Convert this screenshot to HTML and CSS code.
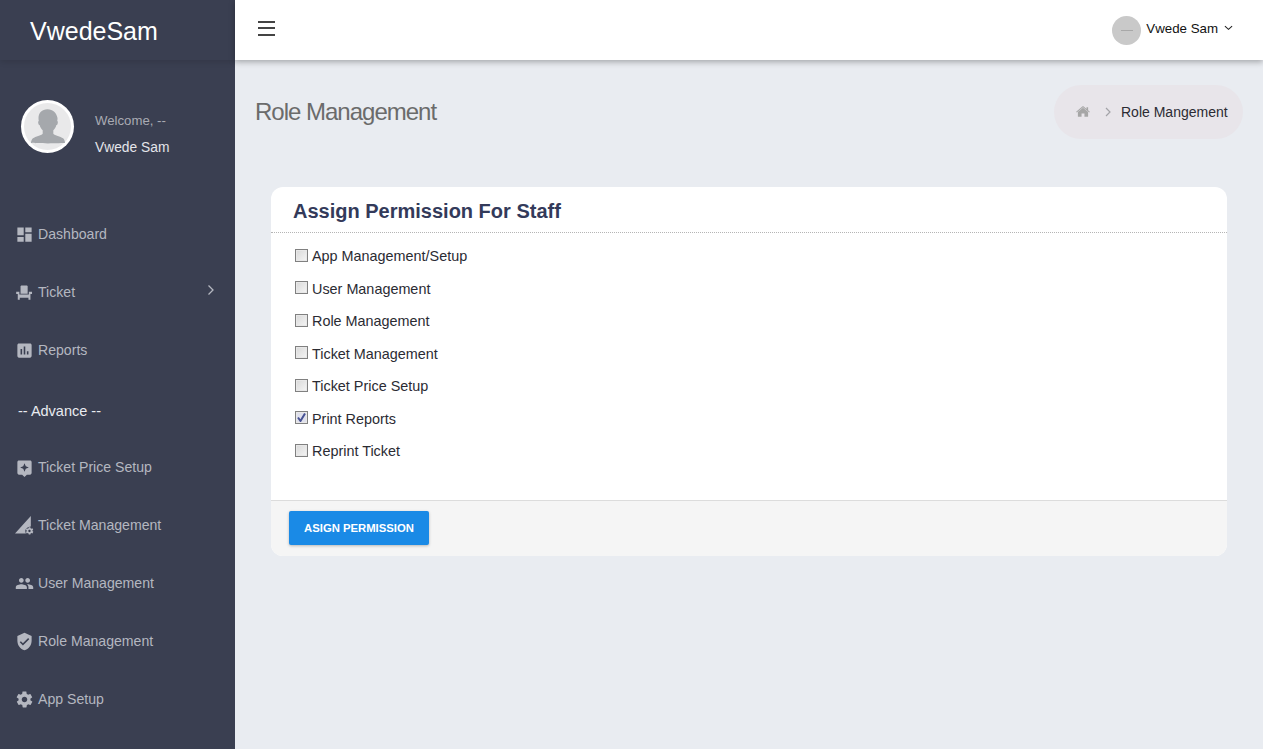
FILE: index.html
```html
<!DOCTYPE html>
<html lang="en">
<head>
  <meta charset="UTF-8">
  <meta name="viewport" content="width=device-width, initial-scale=1">
  <title>Role Management</title>
  <link rel="stylesheet" href="styles.css">
</head>
<body>
  <div class="layout">

    <aside class="sidebar">
      <div class="logo">VwedeSam</div>

      <div class="profile">
        <div class="profile-pic">
          <svg width="47" height="47" viewBox="0 0 46 46">
            <circle cx="23" cy="23" r="23" fill="#e9e9ea"/>
            <path d="M23 6C17.500 6 14.200 9.600 14.200 14.600c0 1.200.1 2.100.3 3-.7.1-.8 1.400-.4 2.600.3 1 .8 1.300 1.200 1.300.6 2.300 1.700 4 3 5.200V30c-1.500 2-7 2.500-9.500 4.500-1.200 1-1.800 2.500-2 4.500 3 .8 30.400.8 33.400 0-.2-2-.8-3.500-2-4.500-2.500-2-8-2.500-9.500-4.500v-3.300c1.300-1.200 2.400-2.900 3-5.200.4 0 .9-.3 1.200-1.300.4-1.200.3-2.500-.4-2.600.2-.9.300-1.800.3-3C31.800 9.600 28.500 6 23 6z" fill="#a5a8ac"/>
          </svg>
        </div>
        <div class="profile-info">
          <span class="welcome">Welcome, --</span>
          <span class="profile-name">Vwede Sam</span>
        </div>
      </div>

      <ul class="menu">
        <li class="menu-item">
          <svg class="menu-icon" viewBox="0 0 24 24"><path d="M3 13h8V3H3v10zm0 8h8v-6H3v6zm10 0h8V11h-8v10zm0-18v6h8V3h-8z"/></svg>
          <span>Dashboard</span>
        </li>
        <li class="menu-item">
          <svg class="menu-icon" viewBox="0 0 24 24"><path d="M7 4.500C7 3.500 7.800 3 8.500 3h6c.8 0 1.500.6 1.500 1.500V13.500H7z"/><path d="M1.500 11h4v3.500h12V11h4v3h-2v7H17v-2.500H6V21H3.500v-7h-2z"/></svg>
          <span>Ticket</span>
          <svg class="menu-arrow" viewBox="0 0 10 12"><path d="M2.500 1.500 7 6l-4.500 4.500" fill="none" stroke="#b4b7c0" stroke-width="1.300"/></svg>
        </li>
        <li class="menu-item">
          <svg class="menu-icon" viewBox="0 0 24 24"><path d="M19 3H5c-1.100 0-2 .9-2 2v14c0 1.100.9 2 2 2h14c1.100 0 2-.9 2-2V5c0-1.100-.9-2-2-2zM9 17H7v-7h2v7zm4 0h-2V7h2v10zm4 0h-2v-4h2v4z"/></svg>
          <span>Reports</span>
        </li>
        <li class="menu-title">-- Advance --</li>
        <li class="menu-item">
          <svg class="menu-icon" viewBox="0 0 24 24"><path d="M19 3H5c-1.100 0-2 .9-2 2v14c0 1.100.9 2 2 2h4l3 3 3-3h4c1.100 0 2-.9 2-2V5c0-1.100-.9-2-2-2zm-7 3.500 1.600 3.900 3.900 1.600-3.900 1.600-1.600 3.900-1.600-3.900L6.500 12l3.900-1.600L12 6.500z"/></svg>
          <span>Ticket Price Setup</span>
        </li>
        <li class="menu-item">
          <svg class="menu-icon" viewBox="0 0 24 24"><path d="M0 22 20 0v13.200c-4 .2-7 2.800-7 5.800 0 1.100.3 2.100.8 3H0z"/><path d="M23 19.700l-1.100-.9c0-.2.100-.4.100-.6l1-.9-1-1.700-1.300.4c-.3-.3-.6-.4-1-.6l-.3-1.300h-2l-.3 1.300c-.4.100-.7.300-1 .6l-1.300-.4-1 1.700 1 .9v1.200l-1 .9 1 1.700 1.300-.4c.3.300.6.400 1 .6l.3 1.300h2l.3-1.300c.4-.1.700-.3 1-.6l1.300.4 1-1.700zM18.300 20.500c-.8 0-1.500-.7-1.500-1.500s.7-1.500 1.500-1.500 1.500.7 1.500 1.500-.7 1.500-1.500 1.500z"/></svg>
          <span>Ticket Management</span>
        </li>
        <li class="menu-item">
          <svg class="menu-icon" viewBox="0 0 24 24"><path d="M16 11c1.700 0 3-1.300 3-3s-1.300-3-3-3-3 1.300-3 3 1.300 3 3 3zm-8 0c1.700 0 3-1.300 3-3S9.700 5 8 5 5 6.300 5 8s1.300 3 3 3zm0 2c-2.300 0-7 1.200-7 3.500V19h14v-2.500C15 14.200 10.300 13 8 13zm8 0h-1c1.200.8 2 2 2 3.500V19h6v-2.500c0-2.300-4.700-3.500-7-3.500z"/></svg>
          <span>User Management</span>
        </li>
        <li class="menu-item">
          <svg class="menu-icon" viewBox="0 0 24 24"><path d="M12 1 3 5v6c0 5.500 3.800 10.700 9 12 5.200-1.300 9-6.500 9-12V5l-9-4zm-2 16-4-4 1.400-1.400 2.600 2.600 6.600-6.600L18 9l-8 8z"/></svg>
          <span>Role Management</span>
        </li>
        <li class="menu-item">
          <svg class="menu-icon" viewBox="0 0 24 24"><path d="M19.400 13c.1-.3.100-.7.100-1s0-.7-.1-1l2.100-1.600c.2-.2.200-.4.100-.6l-2-3.500c-.1-.2-.4-.3-.6-.2l-2.500 1c-.5-.4-1.100-.7-1.700-1l-.4-2.700c0-.2-.2-.4-.5-.4h-4c-.3 0-.5.200-.5.400l-.4 2.700c-.6.300-1.200.6-1.700 1l-2.500-1c-.2-.1-.5 0-.6.200l-2 3.500c-.1.200-.1.400.1.600L4.600 11c-.1.300-.1.700-.1 1s0 .7.100 1l-2.100 1.600c-.2.200-.2.400-.1.600l2 3.500c.1.200.4.300.6.200l2.500-1c.5.400 1.100.7 1.700 1l.4 2.700c0 .2.200.4.500.4h4c.3 0 .5-.2.500-.4l.4-2.700c.6-.3 1.200-.6 1.700-1l2.500 1c.2.100.5 0 .6-.2l2-3.500c.1-.2.100-.4-.1-.6L19.400 13zM12 15.500c-1.900 0-3.500-1.600-3.500-3.500s1.600-3.500 3.500-3.500 3.500 1.600 3.500 3.500-1.600 3.500-3.500 3.500z"/></svg>
          <span>App Setup</span>
        </li>
      </ul>
    </aside>

    <div class="main">
      <header class="topbar">
        <button class="menu-toggle" aria-label="Toggle menu">
          <span></span><span></span><span></span>
        </button>
        <div class="user">
          <div class="user-pic"><span class="user-pic-text"></span></div>
          <span class="user-name">Vwede Sam</span>
          <svg class="user-caret" viewBox="0 0 10 6"><path d="M1 1l4 3.500L9 1" fill="none" stroke="#222" stroke-width="1.200"/></svg>
        </div>
      </header>

      <div class="page-head">
        <h1 class="page-title">Role Management</h1>
        <div class="breadcrumb">
          <svg class="home-icon" viewBox="0 0 26 22"><path d="M13 3.200 3.500 11.100v8.100c0 .5.400.8.800.8h6v-6h5.400v6h6c.4 0 .8-.3.800-.8v-8.100L13 3.200zM25.700 10.400 22.500 7.700V2h-3v3.200L14.300.7c-.7-.6-1.900-.6-2.600 0L.3 10.400l1.100 1.300L13 2l11.600 9.700z"/></svg>
          <svg class="crumb-sep" viewBox="0 0 8 10"><path d="M2 1l4 4-4 4" fill="none" stroke="#a3a3a8" stroke-width="1.200"/></svg>
          <span>Role Mangement</span>
        </div>
      </div>

      <form class="card">
        <h2 class="card-title">Assign Permission For Staff</h2>
        <div class="card-body">
          <label class="check-row"><input type="checkbox"> App Management/Setup</label>
          <label class="check-row"><input type="checkbox"> User Management</label>
          <label class="check-row"><input type="checkbox"> Role Management</label>
          <label class="check-row"><input type="checkbox"> Ticket Management</label>
          <label class="check-row"><input type="checkbox"> Ticket Price Setup</label>
          <label class="check-row"><input type="checkbox" checked> Print Reports</label>
          <label class="check-row"><input type="checkbox"> Reprint Ticket</label>
        </div>
        <div class="card-footer">
          <button type="button" class="btn-primary">ASIGN PERMISSION</button>
        </div>
      </form>
    </div>

  </div>
</body>
</html>
```

FILE: styles.css
```css
* {
  box-sizing: border-box;
}
html, body {
  height: 100%;
}
body {
  margin: 0;
  font-family: "Liberation Sans", Arial, sans-serif;
  font-size: 14px;
  background-color: #e9ecf1;
  overflow: hidden;
}
.layout {
  display: flex;
  height: 749px;
}

/* sidebar */
.sidebar {
  width: 235px;
  flex-shrink: 0;
  background-color: #3a3f51;
  color: #b4b7c0;
}
.logo {
  height: 60px;
  padding: 15px 0 0 30px;
  font-size: 25px;
  line-height: 32px;
  color: #fff;
  box-shadow: 0 2px 6px rgba(0,0,0,0.12);
}
.profile {
  display: flex;
  align-items: flex-start;
  margin-top: 40px;
  padding-left: 21px;
}
.profile-pic {
  width: 53px;
  height: 53px;
  padding: 3px;
  border-radius: 50%;
  background-color: #fff;
}
.profile-pic svg {
  display: block;
}
.profile-info {
  display: flex;
  flex-direction: column;
  gap: 9px;
  margin-top: 12px;
  margin-left: 21px;
  line-height: 18px;
}
.welcome {
  font-size: 13.2px;
  color: #a9abb3;
}
.profile-name {
  font-size: 13.8px;
  color: #e4e5ea;
}
.menu {
  list-style: none;
  margin: 48px 0 0;
  padding: 0;
}
.menu-item {
  display: flex;
  align-items: center;
  height: 58px;
  padding-left: 15px;
  font-size: 14.1px;
}
.menu-icon {
  width: 19px;
  height: 19px;
  margin-right: 4px;
  fill: #b4b7c0;
  flex-shrink: 0;
}
.menu-arrow {
  width: 10px;
  height: 12px;
  margin-left: auto;
  margin-right: 19px;
  margin-top: -4px;
}
.menu-title {
  height: 59px;
  padding: 23px 0 0 18px;
  font-size: 14.5px;
  line-height: 18px;
  color: #e9ebf0;
}

/* top bar */
.main {
  flex: 1;
  min-width: 0;
}
.topbar {
  display: flex;
  align-items: center;
  justify-content: space-between;
  height: 60px;
  padding: 0 30px 4px 23px;
  background-color: #fff;
  box-shadow: 0 2px 6px rgba(0,0,0,0.3);
}
.menu-toggle {
  display: flex;
  flex-direction: column;
  gap: 4.500px;
  width: 17px;
  padding: 0;
  border: none;
  background: none;
}
.menu-toggle span {
  display: block;
  height: 2px;
  width: 17px;
  background-color: #444;
}
.user {
  display: flex;
  align-items: center;
  color: #111;
}
.user-name {
  font-size: 13.3px;
}
.user-pic {
  display: flex;
  align-items: center;
  justify-content: center;
  width: 29px;
  height: 29px;
  margin-right: 5px;
  margin-top: 5px;
  border-radius: 50%;
  background-color: #c9c9c9;
}
.user-pic-text {
  width: 12px;
  height: 1px;
  background-color: #a8a8a8;
}
.user-caret {
  width: 9px;
  height: 6px;
  margin-left: 6px;
}

/* page head */
.page-head {
  display: flex;
  align-items: center;
  justify-content: space-between;
  padding: 25px 20px 0;
}
.page-title {
  margin: 0;
  font-size: 24px;
  font-weight: normal;
  letter-spacing: -1px;
  color: #6b6b6b;
}
.breadcrumb {
  display: flex;
  align-items: center;
  height: 54px;
  width: 189px;
  padding-left: 22px;
  border-radius: 27px;
  background-color: #e8e5ea;
  color: #2b2b33;
}
.home-icon {
  width: 14px;
  height: 12px;
  fill: #a6a6a6;
}
.crumb-sep {
  width: 8px;
  height: 10px;
  margin-left: 14px;
  margin-right: 9px;
}

/* card */
.card {
  margin: 48px 36px 0 36px;
  border-radius: 12px;
  background-color: #fff;
  overflow: hidden;
}
.card-title {
  height: 46px;
  margin: 0;
  padding: 13px 0 0 22px;
  font-size: 20px;
  line-height: 23px;
  color: #333a5a;
  border-bottom: 1px dotted #b5b5b5;
}
.card-body {
  height: 267px;
  padding: 7px 24px 0;
}
.check-row {
  display: flex;
  align-items: center;
  height: 32.5px;
  font-size: 14.4px;
  color: #2b2b33;
}
.check-row input {
  appearance: none;
  width: 13px;
  height: 13px;
  margin: -2px 4px 0 0;
  border: 1px solid #808080;
  background: linear-gradient(135deg, #d8d8d8, #f5f5f5);
  box-shadow: inset 0 0 0 1px #e8e8e8;
}
.check-row input:checked {
  background: url("data:image/svg+xml,%3Csvg xmlns='http://www.w3.org/2000/svg' viewBox='0 0 11 11'%3E%3Cpath d='M2 5.500 4.500 9 9 1.500' fill='none' stroke='%23465193' stroke-width='2'/%3E%3C/svg%3E") center / 11px no-repeat, #dfe0ec;
}
.card-footer {
  height: 56px;
  padding: 10px 18px;
  border-top: 1px solid #dcdcdc;
  background-color: #f5f5f5;
}
.btn-primary {
  display: block;
  width: 140px;
  height: 34px;
  padding: 0;
  border: none;
  border-radius: 2px;
  background-color: #1a8ae6;
  color: #fff;
  font-family: inherit;
  font-size: 11.3px;
  font-weight: bold;
  box-shadow: 0 1px 3px rgba(0,0,0,0.25);
}
```
